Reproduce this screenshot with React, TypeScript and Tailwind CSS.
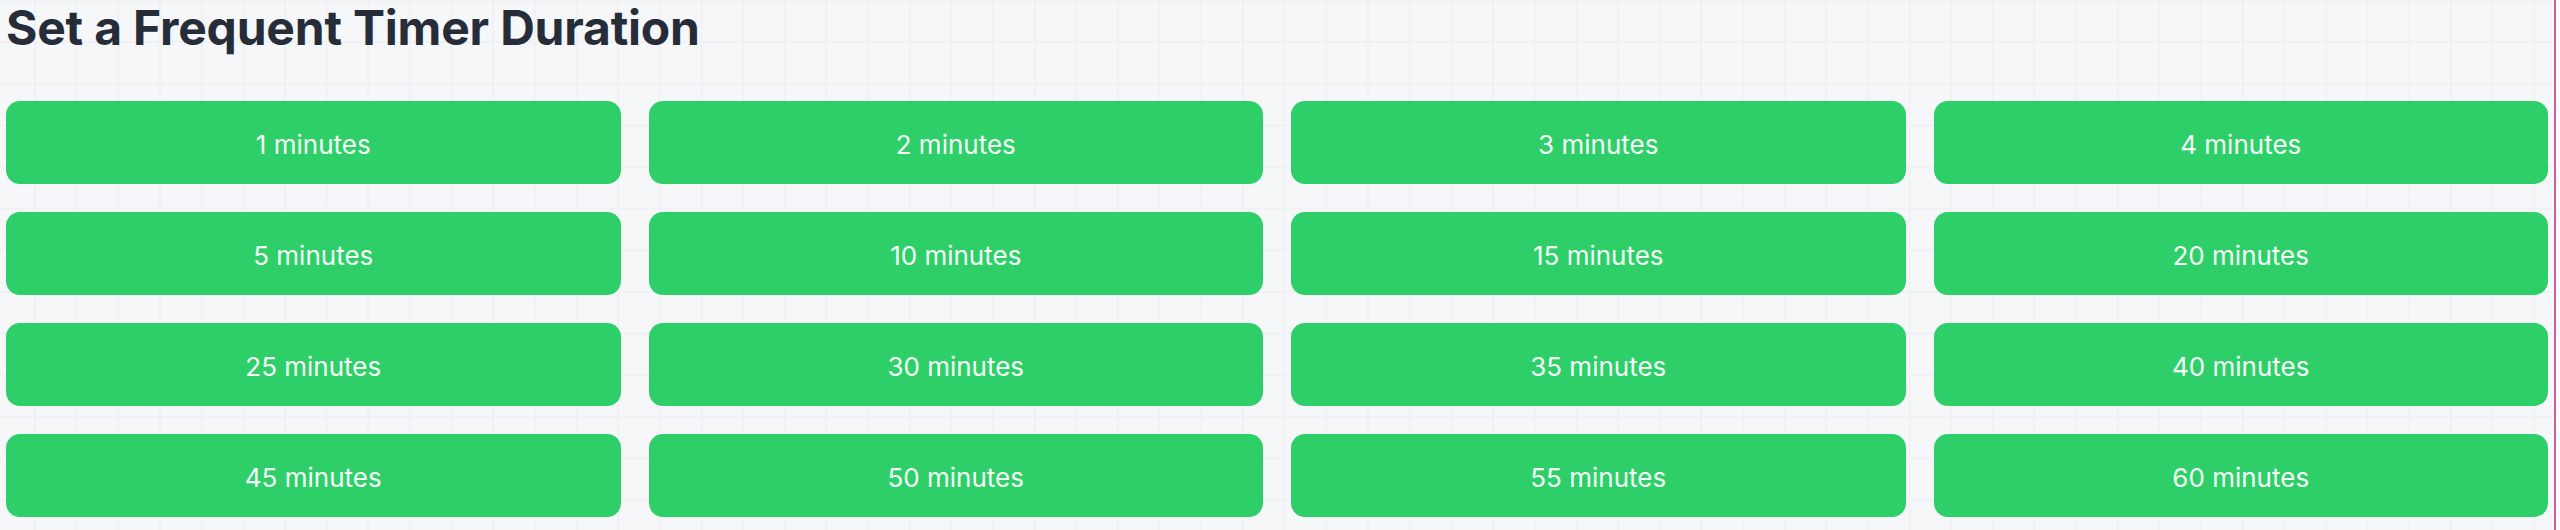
import React from "react";

const durations = [1, 2, 3, 4, 5, 10, 15, 20, 25, 30, 35, 40, 45, 50, 55, 60];

export default function App() {
  return (
    <div className="w-[2556px] min-h-[530px] border-r-2 border-[#d45aa0] bg-[#f6f7f9] bg-[linear-gradient(to_right,#eff1f4_2px,transparent_2px),linear-gradient(to_bottom,#eff1f4_2px,transparent_2px)] bg-[size:41.67px_41.67px] bg-[position:34px_41px] px-[6px] pt-[4px] font-['Inter','Noto_Sans',sans-serif]">
      <h1 className="text-[48px] leading-none font-bold text-[#272c39] tracking-[-0.2px]">
        Set a Frequent Timer Duration
      </h1>
      <div className="mt-[49px] grid grid-cols-4 gap-[28px]">
        {durations.map((d) => (
          <button
            key={d}
            className="flex h-[83px] items-center justify-center rounded-[14px] bg-[#2ecf69] pt-[3px] text-[26px] font-normal text-[#f4fff7]"
          >
            {d} minutes
          </button>
        ))}
      </div>
    </div>
  );
}
